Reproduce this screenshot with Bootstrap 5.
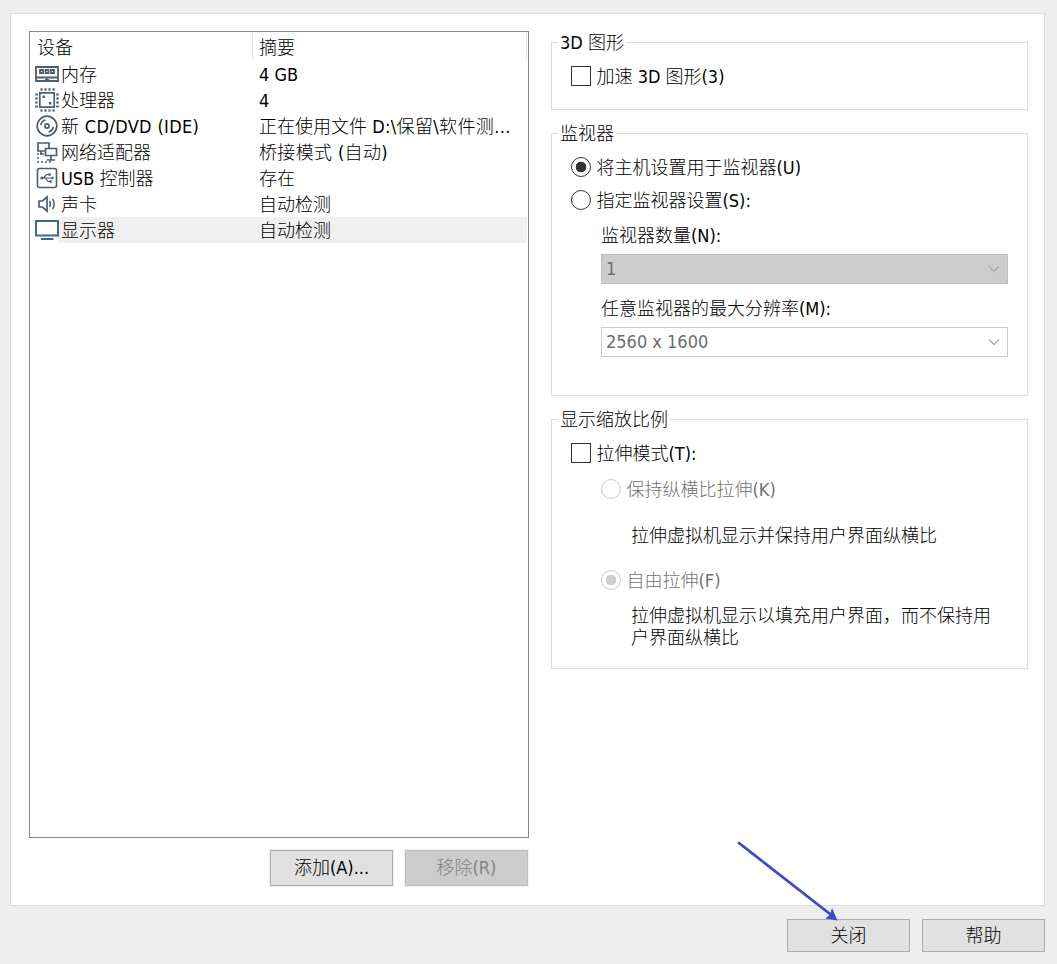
<!DOCTYPE html>
<html lang="zh-CN">
<head>
<meta charset="utf-8">
<meta name="viewport" content="width=device-width, initial-scale=1">
<title>虚拟机设置</title>
<link href="https://cdn.jsdelivr.net/npm/bootstrap@5.3.0/dist/css/bootstrap.min.css" rel="stylesheet">
<style>
body{background:#efefef;color:#000;font-family:"DejaVu Sans Condensed","Noto Sans","Noto Sans CJK SC",sans-serif;font-weight:300;font-size:18px;line-height:24px;height:964px;overflow:hidden}
.dialog{padding:13px 12px 12px 10px;height:964px}
.panel{height:893px;border:1px solid #dcdcdc;background:#fff;padding:17px 16px 0 18px}
.left-pane{width:500px}
.devices{height:807px;border:1px solid #828790;padding-top:1px}
.heads{height:28px;line-height:30px}
.heads>div{border-right:1px solid #e5e5e5}
.c-name{width:223px;padding-left:7px;flex:none}
.c-sum{width:274px;padding-left:6px}
.device{height:26px;padding-left:5px;white-space:nowrap}
.device svg{width:24px;height:24px;flex:none;margin-top:1px;fill:none;stroke:#4d5f6b;stroke-width:2}
.device-text{width:468px;height:26px;line-height:28px;padding-left:2px}
.device-text>span:first-child{width:198px;flex:none}
.device.active .device-text{background:#f0f0f0}
.device.active svg{stroke:#3f698c}
.spaced{letter-spacing:.35px}
.btn-dlg{width:123px;height:36px;border:1px solid #adadad;border-radius:0;background:#e1e1e1;color:#000;font:inherit;line-height:24px;padding:0;outline:1px solid #f0f0f0}
.btn-dlg:disabled{background:#ccc;border-color:#bfbfbf;color:#838383;opacity:1}
.foot .btn-dlg{height:33px;outline:0}
.right-pane{width:477px;margin-left:22px;margin-top:-1px}
.group{border:1px solid #dcdcdc;padding:0 19px 0 6px}
.group legend{font-size:18px;height:24px;line-height:26px;padding:0 2px;margin:0}
.group-body{padding-left:13px}
.choice{height:24px;gap:5.500px;white-space:nowrap}
.choice span{padding-top:2px}
.choice .form-check-input{width:20px;height:20px;margin:0;border:1px solid #333;background-image:none;background-color:#fff;flex:none}
.choice .form-check-input[type=checkbox]{border-radius:0}
.choice .form-check-input:checked{background-image:radial-gradient(circle,#333 5px,transparent 5.6px)}
.choice .form-check-input:disabled{border-color:#ccc;opacity:1}
.choice .form-check-input:disabled:checked{background-image:radial-gradient(circle,#ccc 5px,transparent 5.6px)}
.off{color:#707070}
.indent{padding-left:30px}
.combo{height:30px;width:407px;border:1px solid #ccc;padding:0 7px 0 4px;color:#6d6d6d}
.combo.filled{background:#ccc;border-color:#bfbfbf}
.combo svg{width:12px;height:8px;fill:none;stroke:#a9a9a9;stroke-width:1.3}
.note{line-height:22px;margin-left:60px;width:364px}
.pointer{left:730px;top:834px;width:116px;height:96px;pointer-events:none}
</style>
</head>
<body>
<main class="dialog position-relative">
 <div class="panel d-flex">
  <section class="left-pane">
   <div class="devices">
    <div class="heads d-flex"><div class="c-name">设备</div><div class="c-sum">摘要</div></div>
    <div class="device d-flex"><svg viewBox="0 0 24 24"><path d="M1 5h22v14H1zM1 15.500h22" stroke-width="1.800"/><path d="M5 8h3v3H5zM10.5 8h3v3h-3zM16 8h3v3h-3z" stroke-width="1.8"/><path d="M9 19l3-2 3 2" stroke-width="1.5"/></svg><div class="device-text d-flex"><span>内存</span><span>4 GB</span></div></div>
    <div class="device d-flex"><svg viewBox="0 0 24 24"><path d="M4.800 4.800h14.400v14.400H4.800z" stroke-width="1.700"/><path d="M5.5 1.5h14M5.5 22.5h14" stroke-width="2.6" stroke-dasharray="2 2"/><path d="M1.5 5.5v14M22.5 5.5v14" stroke-width="2.6" stroke-dasharray="2 2"/><path d="M7.500 8.700h2.400M14 15.200h2.400" stroke-width="2.4"/></svg><div class="device-text d-flex"><span>处理器</span><span>4</span></div></div>
    <div class="device d-flex"><svg viewBox="0 0 24 24"><circle cx="12" cy="12" r="9.8" stroke-width="1.7"/><circle cx="12" cy="12" r="2.1" stroke-width="1.7"/><path d="M5.8 11a6.5 6.5 0 0 1 4.6-5M18.2 13a6.5 6.5 0 0 1-4.6 5" stroke-width="1.8"/></svg><div class="device-text d-flex"><span class="spaced">新 CD/DVD (IDE)</span><span>正在使用文件 <span class="spaced">D:\保留\软件测...</span></span></div></div>
    <div class="device d-flex"><svg viewBox="0 0 24 24"><path d="M10 11H3V3h11v5M10.500 8.500h11v7h-11zM16 16v4M12 20h8M6 11v3M5 14h4" stroke-width="1.7"/><path d="M2 14h2M2 18h2M2 22h2M6 22h2M10 22h2M14 22h2" stroke-width="1.7"/></svg><div class="device-text d-flex"><span>网络适配器</span><span class="spaced">桥接模式 (自动)</span></div></div>
    <div class="device d-flex"><svg viewBox="0 0 24 24"><rect x="2.500" y="2.500" width="19" height="19" rx="2" stroke-width="1.600"/><path d="M6 12h12M8.500 12l3-3.500h3M10.500 12l2.500 3.500h3" stroke-width="1.200"/><path d="M5.500 12h2.500M13.500 8.500h2.200M14.500 15.500h2.200M16.500 12h2" stroke-width="2.300"/></svg><div class="device-text d-flex"><span>USB 控制器</span><span>存在</span></div></div>
    <div class="device d-flex"><svg viewBox="0 0 24 24"><path d="M4 9h3.500L12 5v14l-4.500-4H4z" stroke-width="1.700"/><path d="M14.500 9q2 3 0 6M17.500 7q3.500 5 0 10" stroke-width="1.500"/></svg><div class="device-text d-flex"><span>声卡</span><span>自动检测</span></div></div>
    <div class="device active d-flex"><svg viewBox="0 0 24 24"><path d="M1 3h22v14.500H1zM6 21h12.500"/></svg><div class="device-text d-flex"><span>显示器</span><span>自动检测</span></div></div>
   </div>
   <div class="d-flex justify-content-end" style="gap:12px;margin:12px 1px 0 0"><button class="btn btn-dlg">添加(A)...</button><button class="btn btn-dlg" disabled>移除(R)</button></div>
  </section>
  <section class="right-pane">
   <fieldset class="group" style="height:80px">
    <legend class="float-none w-auto">3D 图形</legend>
    <div class="group-body"><label class="choice d-flex align-items-center" style="margin-top:10px"><input class="form-check-input" type="checkbox"><span>加速 3D 图形(3)</span></label></div>
   </fieldset>
   <fieldset class="group" style="height:275px;margin-top:11px">
    <legend class="float-none w-auto">监视器</legend>
    <div class="group-body">
     <label class="choice d-flex align-items-center" style="margin-top:10px"><input class="form-check-input" type="radio" name="monitor" checked><span>将主机设置用于监视器(U)</span></label>
     <label class="choice d-flex align-items-center" style="margin-top:9px"><input class="form-check-input" type="radio" name="monitor"><span>指定监视器设置(S):</span></label>
     <div class="indent">
      <div style="margin-top:12px">监视器数量(N):</div>
      <div class="combo filled d-flex align-items-center justify-content-between" style="margin-top:6px"><span>1</span><svg viewBox="0 0 12 8"><path d="M1 1.500l5 5 5-5"/></svg></div>
      <div style="margin-top:13px">任意监视器的最大分辨率(M):</div>
      <div class="combo d-flex align-items-center justify-content-between" style="margin-top:6px"><span>2560 x 1600</span><svg viewBox="0 0 12 8"><path d="M1 1.500l5 5 5-5"/></svg></div>
     </div>
    </div>
   </fieldset>
   <fieldset class="group" style="height:262px;margin-top:11px">
    <legend class="float-none w-auto">显示缩放比例</legend>
    <div class="group-body">
     <label class="choice d-flex align-items-center" style="margin-top:10px"><input class="form-check-input" type="checkbox"><span>拉伸模式(T):</span></label>
     <label class="choice indent off d-flex align-items-center" style="margin-top:12px"><input class="form-check-input" type="radio" name="stretch" disabled><span>保持纵横比拉伸(K)</span></label>
     <div class="note" style="margin-top:24px">拉伸虚拟机显示并保持用户界面纵横比</div>
     <label class="choice indent off d-flex align-items-center" style="margin-top:21px"><input class="form-check-input" type="radio" name="stretch" checked disabled><span>自由拉伸(F)</span></label>
     <div class="note" style="margin-top:13px">拉伸虚拟机显示以填充用户界面，而不保持用户界面纵横比</div>
    </div>
   </fieldset>
  </section>
 </div>
 <div class="foot d-flex justify-content-end" style="gap:12px;margin-top:13px"><button class="btn btn-dlg">关闭</button><button class="btn btn-dlg">帮助</button></div>
 <svg class="pointer position-absolute" viewBox="0 0 116 96"><path d="M9 9L100 80" stroke="#3f48cc" stroke-width="2.800" stroke-linecap="round"/><path d="M107.500 86.500L95.500 84.500l4.500-4 2-6.500z" fill="#3f48cc"/></svg>
</main>
<script src="https://cdn.jsdelivr.net/npm/bootstrap@5.3.0/dist/js/bootstrap.bundle.min.js"></script>
</body>
</html>
